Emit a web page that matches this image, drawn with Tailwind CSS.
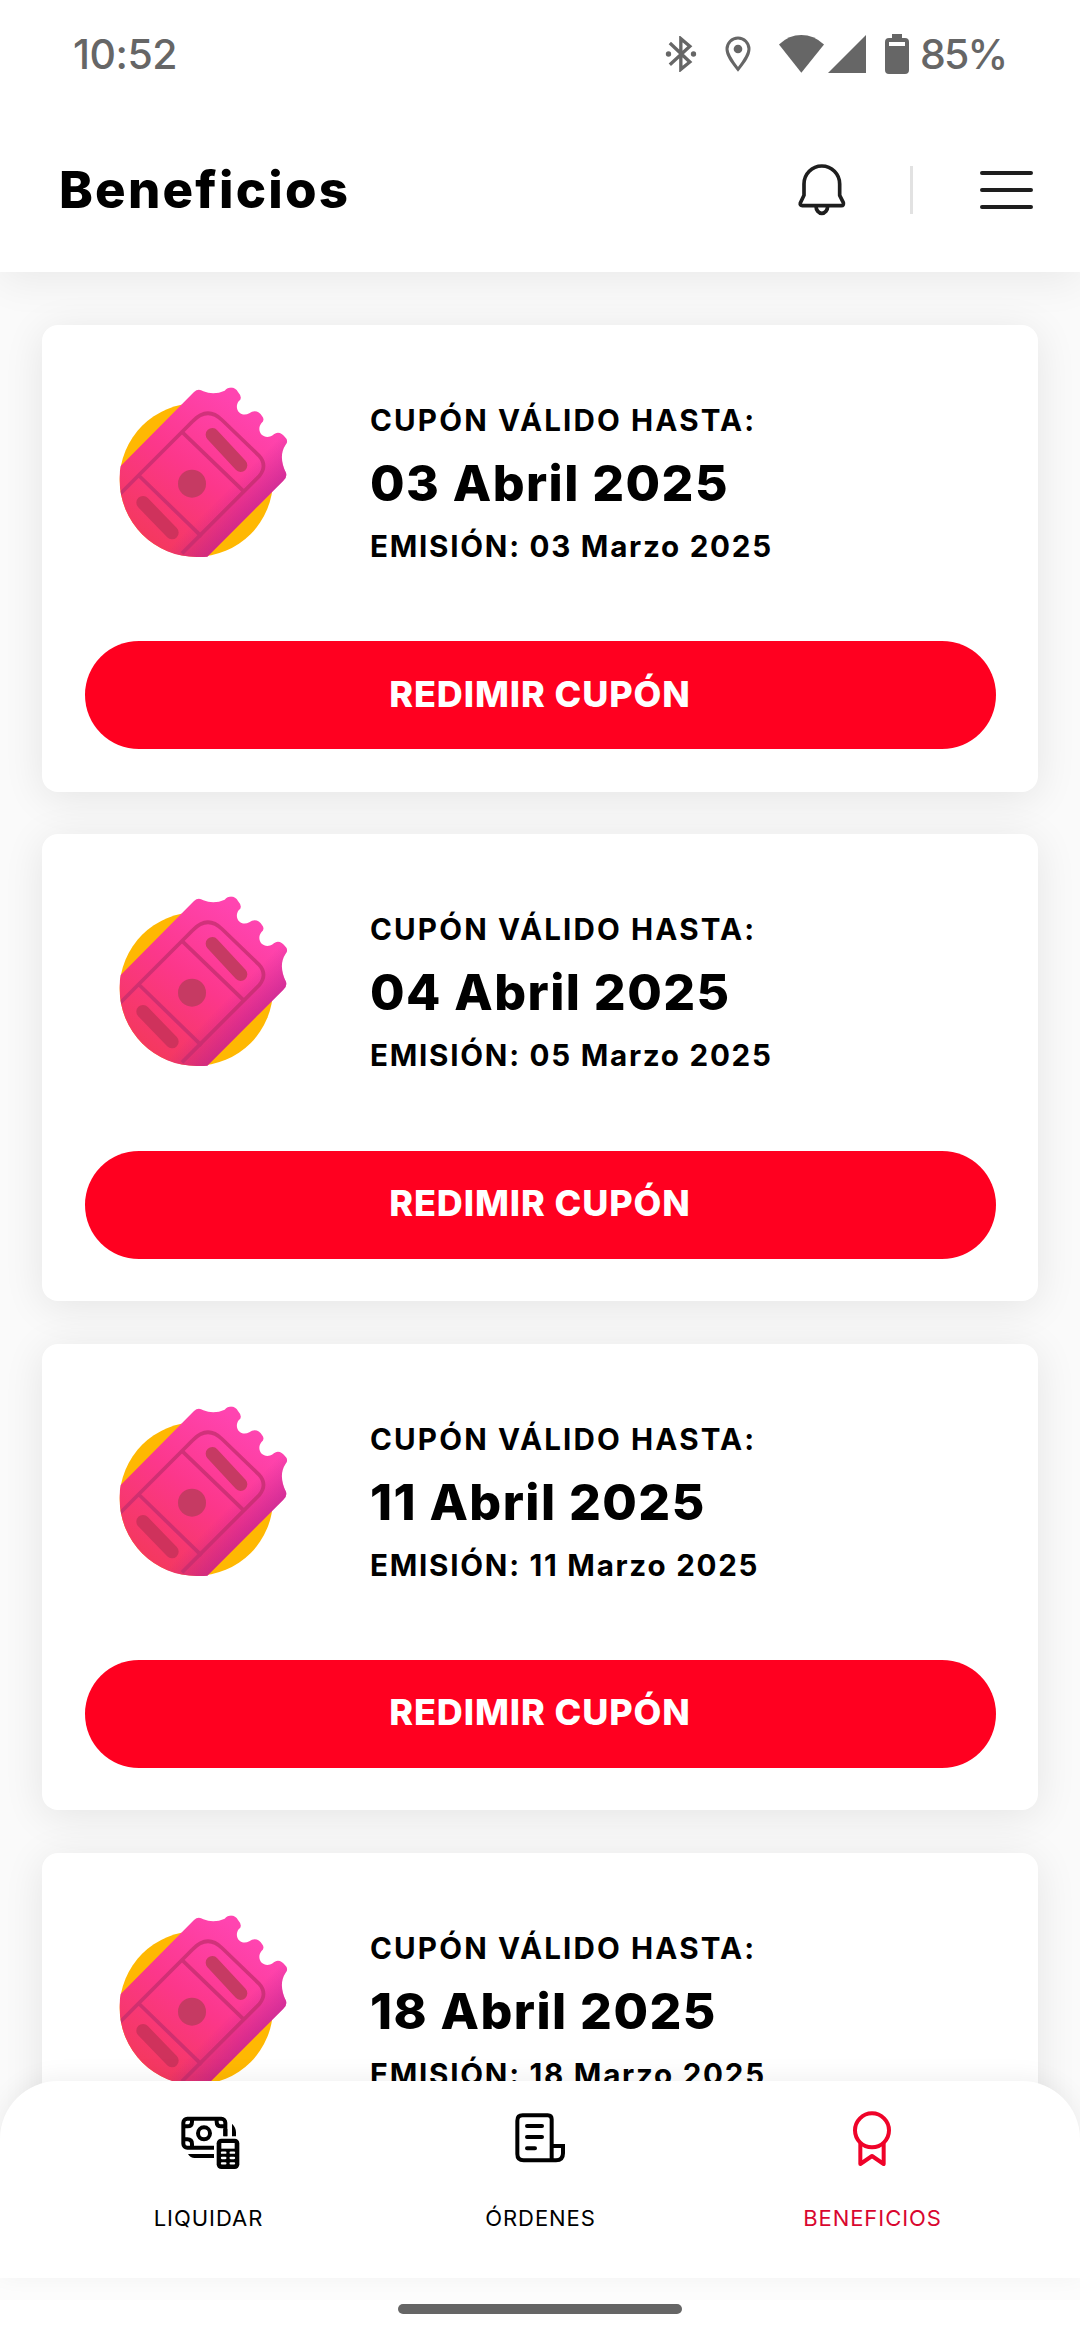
<!DOCTYPE html>
<html lang="es">
<head>
<meta charset="utf-8">
<title>Beneficios</title>
<script src="https://cdn.jsdelivr.net/npm/@tailwindcss/browser@4"></script>
</head>
<body class="bg-white font-['Inter',sans-serif] text-black">
<svg class="absolute size-0">
  <defs>
    <linearGradient id="pink" gradientUnits="userSpaceOnUse" x1="180" y1="520" x2="480" y2="120">
      <stop offset="0" stop-color="#f4385e"/><stop offset=".5" stop-color="#fc378b"/><stop offset="1" stop-color="#ff44b0"/>
    </linearGradient>
    <linearGradient id="edge" gradientUnits="userSpaceOnUse" x1="385" y1="385" x2="458" y2="458">
      <stop offset="0" stop-color="#b01f90" stop-opacity="0"/><stop offset="1" stop-color="#b01f90" stop-opacity=".55"/>
    </linearGradient>
    <clipPath id="body"><path d="M312 66Q325 54 340 64Q372 76 404 62C416 48 436 50 444 66Q460 84 446 94C430 116 452 144 478 130C492 118 508 124 516 138Q526 150 514 160C496 184 522 212 548 196C560 182 576 188 584 200Q598 212 586 226C570 250 574 280 588 308Q592 322 580 332L352 560Q335 562 320 561A231 231 0 0 1 89 330Q88 308 92 288Z"/></clipPath>
  </defs>
  <symbol id="ticket" viewBox="0 0 660 630">
    <circle cx="319" cy="330" r="230" fill="#ffb802"/>
    <g clip-path="url(#body)">
      <path fill="url(#pink)" d="M0 0H660V630H0Z"/>
      <path fill="url(#edge)" d="M0 0H660V630H0Z"/>
      <g fill="none" stroke="#c12d6d" stroke-opacity=".75" stroke-width="11">
        <path d="M90 372L308 154Q352 108 396 150L506 256Q534 286 508 318L276 550M275 185L462 365M148 318L335 500"/>
      </g>
      <g stroke="#c63a63" stroke-width="40" stroke-linecap="round"><path d="M367 194L452 286"/><path d="M159 398L246 488" stroke="#cf325c"/></g>
      <circle cx="306" cy="341" r="42" fill="#c63a63"/>
    </g>
  </symbol>
</svg>

<div class="relative flex h-[2340px] w-[1080px] flex-col overflow-hidden bg-white">
  <header class="relative z-10 h-[272px] shrink-0 bg-white shadow-[0_8px_40px_rgba(0,0,0,0.07)]">
    <div class="flex h-[108px] items-center pl-[73px] text-[41px] leading-none font-medium text-[#666]">
      <span class="tracking-[-0.5px]">10:52</span>
      <svg class="ml-auto h-[36px] w-[32px]" viewBox="75 109 93 108" fill="none" stroke="#666" stroke-width="10">
        <path d="M88 130L148 187L121 209V117L148 140L88 195"/><circle cx="84" cy="163" r="8" fill="#666" stroke="none"/><circle cx="159" cy="163" r="8" fill="#666" stroke="none"/>
      </svg>
      <svg class="ml-[27px] h-[36px] w-[28px]" viewBox="251 108 82 108" fill="none" stroke="#666" stroke-width="9">
        <path d="M292 208C275 186 259 166 259 147A33 33 0 0 1 325 147C325 166 309 186 292 208Z"/><circle cx="292" cy="147" r="13" fill="#666" stroke="none"/>
      </svg>
      <svg class="ml-[27px] h-[38px] w-[45px]" viewBox="417 104 135 113" preserveAspectRatio="none"><path fill="#666" d="M484 216L417 132Q447 104 484 104T552 132Z"/></svg>
      <svg class="ml-[4px] h-[38px] w-[38px]" viewBox="0 0 38 38"><path fill="#666" d="M0 38L38 0V38Z"/></svg>
      <svg class="ml-[19px] h-[40px] w-[24px]" viewBox="0 0 24 40"><path fill="#666" fill-rule="evenodd" d="M7 0H17V4H20Q24 4 24 8V36Q24 40 20 40H4Q0 40 0 36V8Q0 4 4 4H7ZM4 8V12H20V8Z"/></svg>
      <span class="mr-[72px] ml-[11px] w-[88px] tracking-[-1.800px]">85%</span>
    </div>
    <div class="flex h-[164px] items-center pl-[59px]">
      <h1 class="pb-[2px] text-[51px] leading-none font-extrabold tracking-[2.2px]">Beneficios</h1>
      <svg class="ml-auto h-[54px] w-[48px]" viewBox="473 486 144 162" fill="none" stroke="#1e1e1e" stroke-width="11" stroke-linejoin="round">
        <path d="M491 583V549A53.500 54 0 0 1 598 549V583L609 605Q611 614 603 614H486Q478 614 480 606Z"/><path d="M527 616A17.500 21 0 0 0 562 616"/>
      </svg>
      <div class="ml-[64px] h-[48px] w-[3px] bg-[#e2e2e2]"></div>
      <svg class="mr-[47px] ml-[67px] h-[40px] w-[53px]" viewBox="0 0 53 40" stroke="#1e1e1e" stroke-width="4" stroke-linecap="round"><path d="M2 3H51M2 20H51M2 37H51"/></svg>
    </div>
  </header>

  <main id="cards" class="flex h-[1870px] shrink-0 flex-col gap-[42.7px] overflow-hidden bg-[#fafafa] px-[42px] pt-[53px]"></main>
  <div class="h-[136px] shrink-0"></div>

  <div class="relative z-10 h-[62px] shrink-0 bg-white">
    <div class="h-[22px] bg-[#fcfcfc]"></div>
    <div class="mx-auto mt-[4px] h-[10px] w-[284px] rounded-full bg-[#666]"></div>
  </div>

  <nav class="absolute inset-x-0 top-[2081px] z-10 grid h-[197px] grid-cols-3 rounded-t-[58px] bg-white px-[42px] text-center text-[22px] leading-[30px] tracking-[0.95px] shadow-[0_-4px_24px_rgba(0,0,0,0.06)]">
    <a class="flex flex-col items-center">
      <svg class="mt-[20px] ml-[3px] h-[80px] w-[100px]" viewBox="0 0 300 240" fill="none" stroke="#000" stroke-width="12">
        <rect x="70" y="53" width="126" height="87" rx="12"/><circle cx="132" cy="97" r="18"/>
        <path d="M96 53V62Q96 76 82 76H70M170 53V62Q170 76 184 76H196M70 115H82Q96 115 96 129V140"/>
        <path d="M162 134V164H238V105H186V106H162Z" fill="#fff" stroke="none"/>
        <path d="M196 84V106"/><path fill="#000" stroke="none" d="M216 68Q228 80 228 94V106H216ZM84 159H162V171H104Q91 171 84 159Z"/>
        <rect x="170" y="113" width="68" height="91" rx="14" fill="#000" stroke="none"/>
        <path fill="#fff" stroke="none" d="M184 126H224V143H184Z"/>
        <path stroke="#fff" stroke-width="7" stroke-linecap="round" d="M186 155H196M212 155H222M186 171H196M212 171H222M186 187H196M212 187H222"/>
      </svg>
      <span class="mt-[22px] pl-px">LIQUIDAR</span>
    </a>
    <a class="flex flex-col items-center">
      <svg class="mt-[19px] h-[80px] w-[80px]" viewBox="0 0 240 240" fill="none" stroke="#000" stroke-width="12">
        <path d="M155 181V58Q155 46 143 46H68Q52 46 52 62V162Q52 181 71 181H168Q189 181 189 160V138H156"/>
        <path stroke-linecap="round" d="M81 78H126M81 111H126M81 145H105"/>
      </svg>
      <span class="mt-[23px] pl-px">ÓRDENES</span>
    </a>
    <a class="flex flex-col items-center text-[#d9062f]">
      <svg class="mt-[29px] h-[60px] w-[40px]" viewBox="0 0 120 180" fill="none" stroke="#ef0329" stroke-width="12" stroke-linejoin="round">
        <circle cx="60" cy="61" r="51"/><path d="M25 100V162L60 138L95 162V100"/>
      </svg>
      <span class="mt-[33px] pl-px">BENEFICIOS</span>
    </a>
  </nav>
</div>

<script>
const coupons = [
  ['03 Abril 2025', '03 Marzo 2025'],
  ['04 Abril 2025', '05 Marzo 2025'],
  ['11 Abril 2025', '11 Marzo 2025'],
  ['18 Abril 2025', '18 Marzo 2025'],
];
// The last card is cut off by the bottom bar, above its button.
const button = `<button class="h-[108px] w-full rounded-full bg-[#ff0020] pb-[3px] text-[36px] leading-none font-extrabold tracking-[0.9px] text-white">REDIMIR CUPÓN</button>`;
document.getElementById('cards').innerHTML = coupons.map(([until, issued], i) => `
  <article class="flex h-[466.6px] shrink-0 flex-col rounded-[16px] bg-white px-[42.5px] shadow-[0_6px_42px_rgba(0,0,0,0.09)]">
    <div class="flex h-[316.300px] shrink-0">
      <svg class="mt-[45px] ml-[5.500px] h-[210px] w-[220px] shrink-0"><use href="#ticket"/></svg>
      <div class="ml-[60px] pt-[65px] font-bold whitespace-nowrap">
        <p class="text-[29.6px] leading-[60px] tracking-[2.15px]">CUPÓN VÁLIDO HASTA:</p>
        <p class="text-[50px] leading-[67px] font-extrabold tracking-[1.45px]">${until}</p>
        <p class="text-[29.6px] leading-[58px] tracking-[1.75px]">EMISIÓN: ${issued}</p>
      </div>
    </div>
    ${i < coupons.length - 1 ? button : ''}
  </article>`).join('');
</script>
</body>
</html>
